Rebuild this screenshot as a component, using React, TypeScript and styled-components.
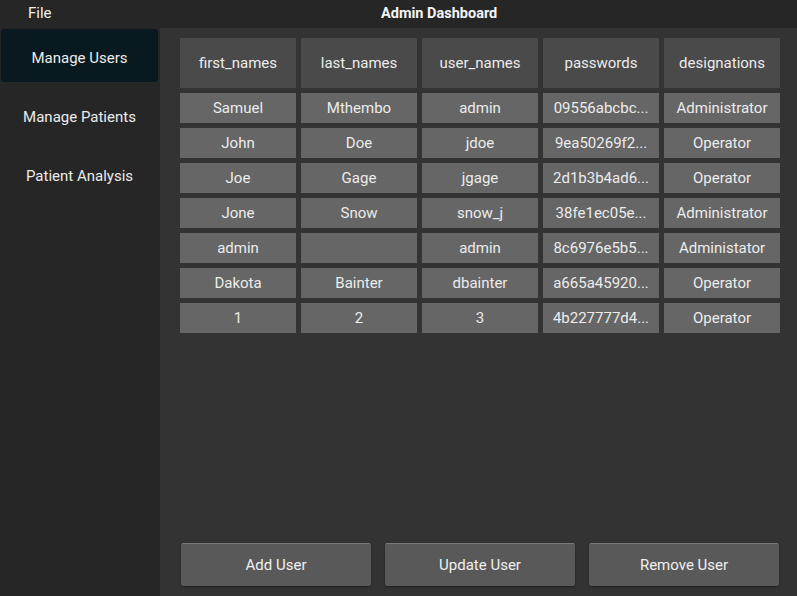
import React from "react";
import styled, { createGlobalStyle } from "styled-components";

const Global = createGlobalStyle`
  html, body { margin: 0; padding: 0; background: #333333; }
  body { font-family: Roboto, "Liberation Sans", sans-serif; }
  * { box-sizing: border-box; }
`;

const Page = styled.div`
  width: 797px;
  height: 596px;
  display: flex;
  flex-direction: column;
  background: #333333;
  color: #ececec;
  overflow: hidden;
`;

const TopBar = styled.div`
  height: 28px;
  flex: none;
  background: #262626;
  display: flex;
  align-items: center;
  padding-bottom: 2px;
`;

const MenuItem = styled.div`
  font-size: 15px;
  width: 381px;
  padding-left: 28px;
  color: #f0f0f0;
`;

const Title = styled.div`
  font-size: 14.5px;
  font-weight: 700;
  color: #f4f4f4;
`;

const Body = styled.div`
  flex: 1;
  display: flex;
  min-height: 0;
`;

const Sidebar = styled.div`
  width: 160px;
  flex: none;
  background: #262626;
  display: flex;
  flex-direction: column;
  gap: 6px;
  padding: 1px 2px 0 1px;
`;

const NavItem = styled.div<{ $active?: boolean }>`
  height: 53px;
  display: flex;
  align-items: center;
  justify-content: center;
  padding-top: 4px;
  font-size: 15px;
  border-radius: 3px;
  color: #ececec;
  background: ${(p) => (p.$active ? "#08191f" : "transparent")};
`;

const Content = styled.div`
  flex: 1;
  display: flex;
  flex-direction: column;
  justify-content: space-between;
  padding: 10px 17px 10px 20px;
`;

const Table = styled.div`
  display: grid;
  grid-template-columns: repeat(5, 116px);
  grid-template-rows: 50px;
  grid-auto-rows: 30px;
  column-gap: 5px;
  row-gap: 5px;
`;

const HeadCell = styled.div`
  background: #4a4a4a;
  display: flex;
  align-items: center;
  justify-content: center;
  font-size: 15px;
  color: #ececec;
`;

const Cell = styled.div`
  background: #666666;
  display: flex;
  align-items: center;
  justify-content: center;
  font-size: 15px;
  color: #ececec;
  white-space: nowrap;
`;

const Buttons = styled.div`
  display: grid;
  grid-template-columns: repeat(3, 190px);
  column-gap: 14px;
  padding-left: 1px;
`;

const Button = styled.button`
  height: 43px;
  background: #595959;
  border: none;
  border-top: 1px solid #7a7a7a;
  border-radius: 2px;
  box-shadow: 0 1px 2px rgba(0, 0, 0, 0.45);
  color: #f0f0f0;
  font-family: Roboto, "Liberation Sans", sans-serif;
  font-size: 15px;
  display: flex;
  align-items: center;
  justify-content: center;
  padding: 0;
`;

const headers = ["first_names", "last_names", "user_names", "passwords", "designations"];
const rows = [
  ["Samuel", "Mthembo", "admin", "09556abcbc...", "Administrator"],
  ["John", "Doe", "jdoe", "9ea50269f2...", "Operator"],
  ["Joe", "Gage", "jgage", "2d1b3b4ad6...", "Operator"],
  ["Jone", "Snow", "snow_j", "38fe1ec05e...", "Administrator"],
  ["admin", "", "admin", "8c6976e5b5...", "Administator"],
  ["Dakota", "Bainter", "dbainter", "a665a45920...", "Operator"],
  ["1", "2", "3", "4b227777d4...", "Operator"],
];

export default function App() {
  return (
    <Page>
      <Global />
      <TopBar>
        <MenuItem>File</MenuItem>
        <Title>Admin Dashboard</Title>
      </TopBar>
      <Body>
        <Sidebar>
          <NavItem $active>Manage Users</NavItem>
          <NavItem>Manage Patients</NavItem>
          <NavItem>Patient Analysis</NavItem>
        </Sidebar>
        <Content>
          <Table>
            {headers.map((h) => (
              <HeadCell key={h}>{h}</HeadCell>
            ))}
            {rows.map((r, i) =>
              r.map((c, j) => <Cell key={`${i}-${j}`}>{c}</Cell>)
            )}
          </Table>
          <Buttons>
            <Button>Add User</Button>
            <Button>Update User</Button>
            <Button>Remove User</Button>
          </Buttons>
        </Content>
      </Body>
    </Page>
  );
}
